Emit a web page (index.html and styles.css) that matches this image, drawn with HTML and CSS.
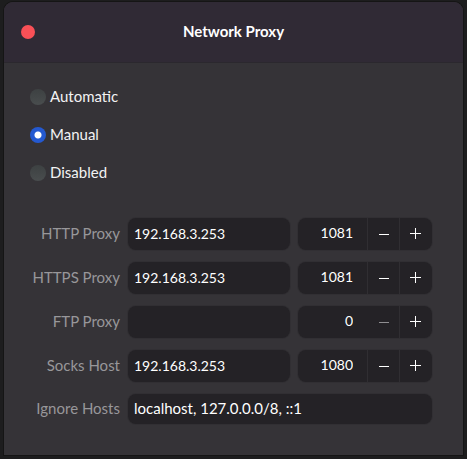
FILE: index.html
```html
<!DOCTYPE html>
<html lang="en">
<head>
<meta charset="utf-8">
<title>Network Proxy</title>
<link rel="stylesheet" href="styles.css">
</head>
<body>
<main class="window">
  <header class="titlebar">
    <button class="close" type="button" aria-label="Close"></button>
    <h1 class="title">Network Proxy</h1>
  </header>
  <form class="content">
    <div class="modes">
      <label class="mode"><input class="radio" type="radio" name="mode"><span class="caption">Automatic</span></label>
      <label class="mode"><input class="radio" type="radio" name="mode" checked><span class="caption">Manual</span></label>
      <label class="mode"><input class="radio" type="radio" name="mode"><span class="caption">Disabled</span></label>
    </div>
    <div class="fields">
      <label class="name" for="http">HTTP Proxy</label>
      <input class="entry" id="http" type="text" value="192.168.3.253">
      <div class="spin">
        <input class="port" type="text" value="1081" aria-label="HTTP port">
        <button class="step" type="button" aria-label="Decrease"><svg class="icon" viewBox="0 0 12 12"><path d="M1 6.5h10"/></svg></button>
        <button class="step" type="button" aria-label="Increase"><svg class="icon" viewBox="0 0 12 12"><path d="M0 5.5h11M5.500 0v11"/></svg></button>
      </div>

      <label class="name" for="https">HTTPS Proxy</label>
      <input class="entry" id="https" type="text" value="192.168.3.253">
      <div class="spin">
        <input class="port" type="text" value="1081" aria-label="HTTPS port">
        <button class="step" type="button" aria-label="Decrease"><svg class="icon" viewBox="0 0 12 12"><path d="M1 6.5h10"/></svg></button>
        <button class="step" type="button" aria-label="Increase"><svg class="icon" viewBox="0 0 12 12"><path d="M0 5.5h11M5.500 0v11"/></svg></button>
      </div>

      <label class="name" for="ftp">FTP Proxy</label>
      <input class="entry" id="ftp" type="text" value="">
      <div class="spin">
        <input class="port" type="text" value="0" aria-label="FTP port">
        <button class="step" type="button" aria-label="Decrease" disabled><svg class="icon" viewBox="0 0 12 12"><path d="M1 6.5h10"/></svg></button>
        <button class="step" type="button" aria-label="Increase"><svg class="icon" viewBox="0 0 12 12"><path d="M0 5.5h11M5.500 0v11"/></svg></button>
      </div>

      <label class="name" for="socks">Socks Host</label>
      <input class="entry" id="socks" type="text" value="192.168.3.253">
      <div class="spin">
        <input class="port" type="text" value="1080" aria-label="Socks port">
        <button class="step" type="button" aria-label="Decrease"><svg class="icon" viewBox="0 0 12 12"><path d="M1 6.5h10"/></svg></button>
        <button class="step" type="button" aria-label="Increase"><svg class="icon" viewBox="0 0 12 12"><path d="M0 5.5h11M5.500 0v11"/></svg></button>
      </div>

      <label class="name" for="ignore">Ignore Hosts</label>
      <input class="entry wide" id="ignore" type="text" value="localhost, 127.0.0.0/8, ::1">
    </div>
  </form>
</main>
</body>
</html>
```
FILE: styles.css
```css
* {
  box-sizing: border-box;
}

body {
  margin: 0;
  padding: 2px 4px 4px;
  min-height: 100vh;
  display: flex;
  background: #1d1d1e;
  color: #f2f2f3;
  font: 15px/18px Lato, "Noto Sans", sans-serif;
}

.window {
  flex: 1;
  background: #353337;
  border-radius: 9px 9px 0 0;
  box-shadow: 0 0 0 1px #151515;
  overflow: hidden;
}

.titlebar {
  display: grid;
  grid-template-columns: 48px 1fr 48px;
  align-items: center;
  height: 61px;
  background: #302a35;
  border-bottom: 1px solid #2b282e;
}

.close {
  width: 14px;
  height: 14px;
  margin-left: 17px;
  padding: 0;
  border: 0;
  border-radius: 50%;
  background: #f95057;
}

.title {
  margin: 0;
  padding-bottom: 2px;
  color: #fff;
  font-size: 15px;
  text-align: center;
}

.content {
  padding: 24px 31px 30px 26px;
}

.modes {
  display: grid;
  gap: 18px;
  margin-bottom: 35px;
}

.mode {
  display: flex;
  align-items: center;
  gap: 4px;
}

.caption,
.name {
  padding-bottom: 2px;
}

.radio {
  appearance: none;
  width: 16px;
  height: 16px;
  margin: 0;
  border-radius: 50%;
  background: linear-gradient(#3d4142, #494d4e);
}

.radio:checked {
  background: radial-gradient(circle, #fff 3px, transparent 4px), #2459d0;
}

.fields {
  display: grid;
  grid-template-columns: 91px 1fr 134px;
  column-gap: 8px;
  row-gap: 12px;
  align-items: center;
  margin-left: -1px;
}

.name {
  color: #98979a;
  text-align: right;
  white-space: nowrap;
}

.entry,
.spin {
  width: 100%;
  min-width: 0;
  height: 32px;
  border: 0;
  border-radius: 8px;
  background: #242226;
  box-shadow: 0 0 0 1px #312f33;
}

.entry,
.port {
  padding: 0 6px 2px;
  color: #fff;
  font: inherit;
  font-size: 14px;
}

.wide {
  grid-column: 2 / -1;
  height: 30px;
  font-size: 15px;
}

.spin {
  display: flex;
}

.port {
  flex: 1;
  min-width: 0;
  padding-right: 14px;
  border: 0;
  background: none;
  text-align: right;
}

.step {
  display: grid;
  place-items: center;
  width: 32px;
  padding: 0;
  border: 0;
  border-left: 1px solid #302e32;
  background: none;
  color: #fff;
}

.step:last-child {
  width: 33px;
}

.step:disabled {
  border-left-color: transparent;
  color: #8f8e91;
}

.icon {
  width: 12px;
  height: 12px;
  fill: none;
  stroke: currentColor;
}
```
